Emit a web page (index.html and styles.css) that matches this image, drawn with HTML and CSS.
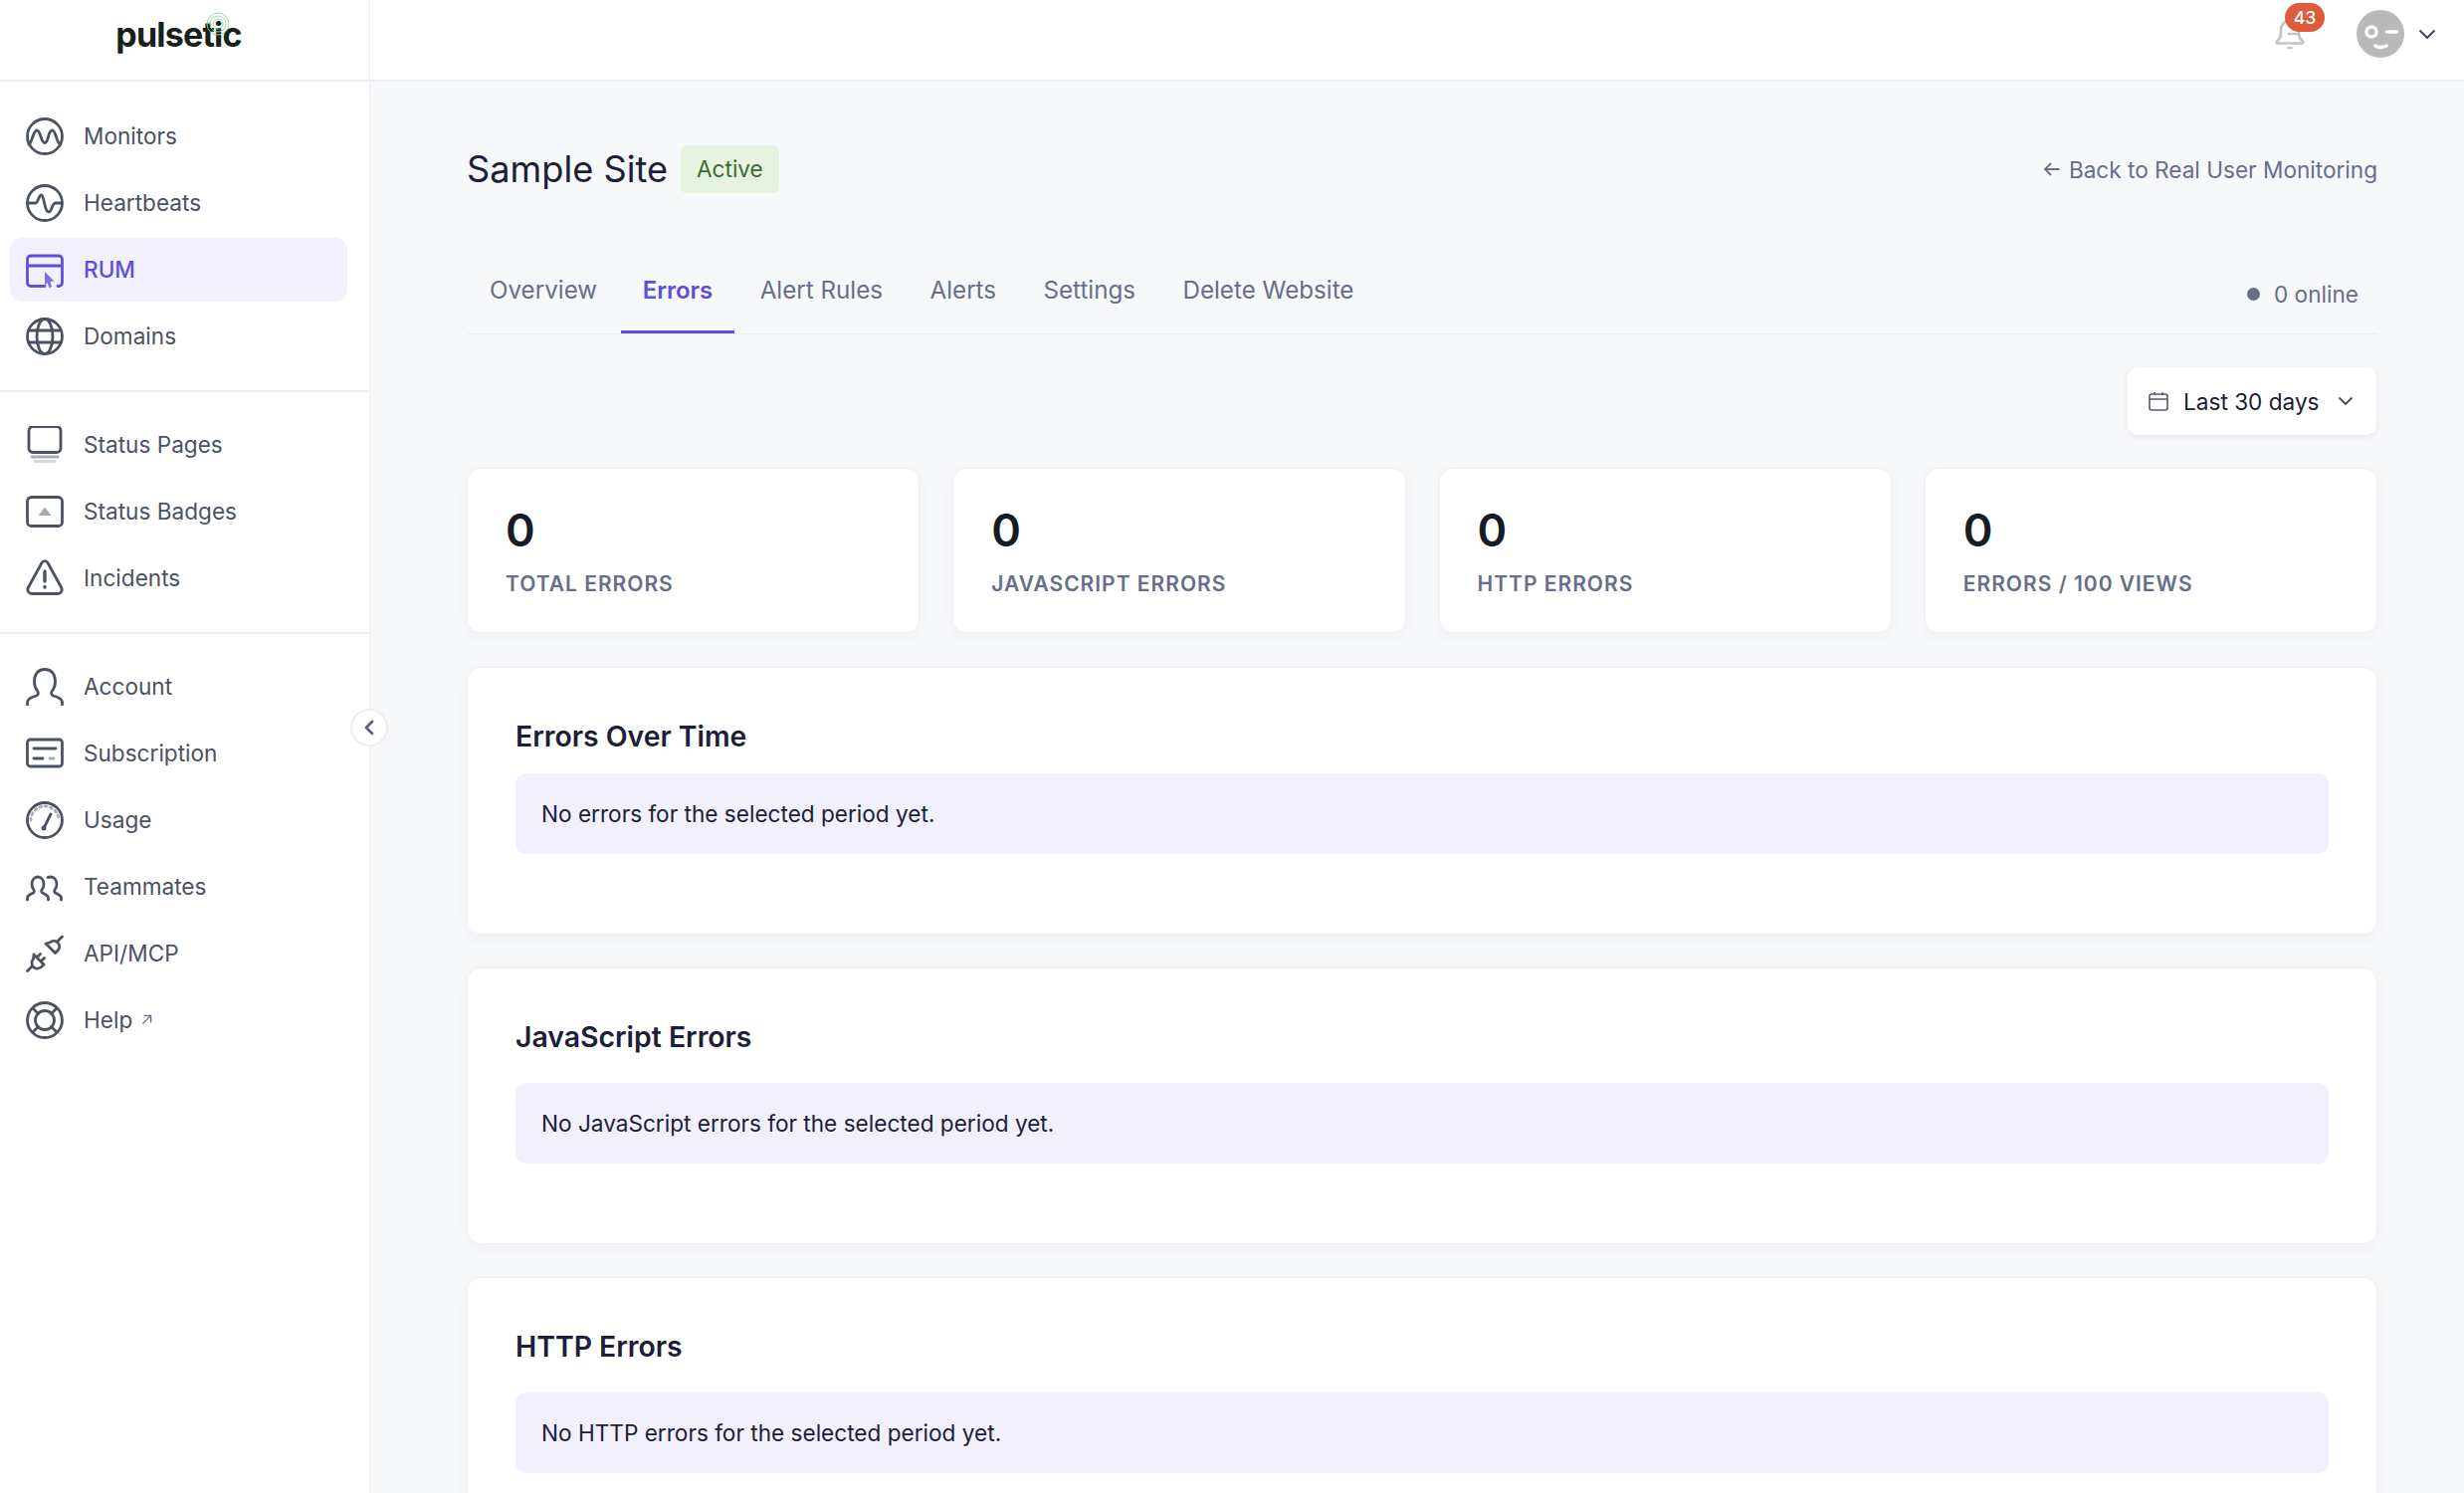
FILE: index.html
```html
<!DOCTYPE html>
<html lang="en">
<head>
    <meta charset="UTF-8">
    <title>Sample Site - Errors</title>
    <link rel="stylesheet" href="styles.css">
</head>
<body>
<div class="app">
    <aside class="sidebar">
        <div class="logo-row">
            <div class="logo">
                <svg class="logo-rings" viewBox="0 0 24 24"><circle cx="12" cy="12" r="5" /><circle cx="12" cy="12" r="8" /><circle cx="12" cy="12" r="11" /></svg>
                pulsetic
            </div>
        </div>
        <nav class="nav-group">
            <a class="nav-item"><svg class="nav-icon" viewBox="0 0 38 38"><circle cx="19" cy="19" r="17.5" /><path d="M3 27c3 0 4-14 8-14 4 0 4 12.500 8 12.500S22 13 26.500 13c4 0 4 14 8.500 14" /></svg>Monitors</a>
            <a class="nav-item"><svg class="nav-icon" viewBox="0 0 38 38"><circle cx="19" cy="19" r="17.5" /><path d="M2 19h8c2 0 3-8 5.500-8 3 0 3 17 7.500 17 3 0 3-9 7-9h6" /></svg>Heartbeats</a>
            <a class="nav-item active"><svg class="nav-icon" viewBox="0 0 38 38"><path d="M32 35.500h1a3.500 3.500 0 0 0 3.500-3.500V8.500A3.500 3.500 0 0 0 33 5H5A3.500 3.500 0 0 0 1.500 8.500V32A3.500 3.500 0 0 0 5 35.500h14M2 15h34" /><path class="fill soft" d="M19 21l9.500 9.500-4 .5 1.500 5-2.500 1.500-2-5.500-2.500 3z" /></svg>RUM</a>
            <a class="nav-item"><svg class="nav-icon" viewBox="0 0 38 38"><circle cx="19" cy="19" r="17.5" /><ellipse cx="19" cy="19" rx="8" ry="17.5" /><path d="M3 13h32M3 25h32" /></svg>Domains</a>
        </nav>
        <nav class="nav-group">
            <a class="nav-item"><svg class="nav-icon" viewBox="0 0 38 38"><rect x="3" y="0.5" width="32" height="26" rx="4" /><path class="light" d="M6 31h26" /><path class="lighter" d="M9 35.500h20" /></svg>Status Pages</a>
            <a class="nav-item"><svg class="nav-icon" viewBox="0 0 38 38"><rect x="1.5" y="4.5" width="35" height="29" rx="4" /><path class="fill gray" d="M19 14.500l6.500 8.500h-13z" /></svg>Status Badges</a>
            <a class="nav-item"><svg class="nav-icon" viewBox="0 0 38 38"><path d="M16 3.500c1.500-2.500 4.500-2.500 6 0L35.500 28c1.800 3.500-.5 6.500-3.500 6.500H6c-3 0-5.300-3-3.500-6.500z" /><path class="thick" d="M19 12v10M19 27.500v.5" /></svg>Incidents</a>
        </nav>
        <nav class="nav-group">
            <a class="nav-item"><svg class="nav-icon" viewBox="0 0 38 38"><path d="M1.500 37v-2c0-3.500 3-5 6-6l3-1c2-1 2.500-3 1-5-2-2.500-3-5-3-9C8.500 6 12.500 1.500 19 1.500S29.500 6 29.500 14c0 4-1 6.500-3 9-1.500 2-1 4 1 5l3 1c3 1 6 2.500 6 6v2" /></svg>Account</a>
            <a class="nav-item"><svg class="nav-icon" viewBox="0 0 38 38"><rect x="1.5" y="5" width="35" height="27" rx="3" /><path d="M8 14h22" /><path d="M8 24h9" /><path class="light" d="M24 24h4" /></svg>Subscription</a>
            <a class="nav-item"><svg class="nav-icon" viewBox="0 0 38 38"><circle cx="19" cy="19" r="17.5" /><path class="light dots" d="M5 19a14 14 0 0 1 28 0" /><path d="M18 27l7-14" /><circle class="fill" cx="18" cy="27" r="2.5" /></svg>Usage</a>
            <a class="nav-item"><svg class="nav-icon" viewBox="0 0 38 38"><path d="M1.500 32v-2c0-2 2-3 4-4l2-1c1-.5 1-2 .5-3-1.500-2-2-3.500-2-5.500 0-4.500 2.500-7.500 6-7.500s6 3 6 7.500c0 2-.5 3.500-2 5.500-.5 1-.5 2.500.5 3l2 1c2 1 4 2 4 4v2" /><path d="M22 9.500c1-.5 2-.5 3-.5 3.500 0 6 3 6 7.500 0 2-.5 3.500-2 5.500-.5 1-.5 2.500.5 3l2 1c2 1 4 2 4 4v2" /></svg>Teammates</a>
            <a class="nav-item"><svg class="nav-icon" viewBox="0 0 38 38"><path d="M1.500 36.500l5-5M8 20l10 10-2.500 2.500c-2.500 2-6 2-8 0s-2-6 0-8zM11 23l3.500-3.500M15 27l3.500-3.500" /><path d="M20 9l9.500 9.500L32 16c2.500-2.500 2-6 0-8s-5.500-2.500-8 0zM32 6.500L36.500 2" /></svg>API/MCP</a>
            <a class="nav-item"><svg class="nav-icon" viewBox="0 0 38 38"><circle cx="19" cy="19" r="17.5" /><circle cx="19" cy="19" r="9.5" /><path d="M7 7l5.500 5.500M31 7l-5.500 5.500M7 31l5.500-5.500M31 31l-5.500-5.500" /></svg>Help<svg class="ext-icon" viewBox="0 0 12 12"><path d="M1.500 10.500l9-9M3 1.500h7.500V9" /></svg></a>
        </nav>
    </aside>

    <button class="collapse-btn"><svg viewBox="0 0 12 16"><path d="M9 2L3 8l6 6" /></svg></button>

    <div class="main">
        <header class="topbar">
            <div class="bell">
                <svg viewBox="0 0 32 32"><path d="M3 23.500c2-2 4-3 4-8v-3c0-6 4-10 9-10s9 4 9 10v3c0 5 2 6 4 8 .8 1 .3 2-1 2H4c-1.300 0-1.800-1-1-2zM14.500 30h3M15 16h10" /></svg>
                <span class="bell-count">43</span>
            </div>
            <div class="avatar">
                <svg viewBox="0 0 48 48"><circle class="avatar-face" cx="24" cy="24" r="24" /><circle class="avatar-eye" cx="15" cy="22" r="5" /><path class="avatar-line" d="M30.500 22h10M19 36c3 2 7 2 11 0" /></svg>
            </div>
            <svg class="top-chevron" viewBox="0 0 18 12"><path d="M1.500 2.500L9 10l7.500-7.500" /></svg>
        </header>

        <main class="content">
            <div class="page-head">
                <div class="title-wrap">
                    <h1>Sample Site</h1>
                    <span class="status-badge">Active</span>
                </div>
                <a class="back-link"><svg viewBox="0 0 18 16"><path d="M16.500 8H2M8 2L2 8l6 6" /></svg>Back to Real User Monitoring</a>
            </div>

            <div class="tabs">
                <a class="tab">Overview</a>
                <a class="tab active">Errors</a>
                <a class="tab">Alert Rules</a>
                <a class="tab">Alerts</a>
                <a class="tab">Settings</a>
                <a class="tab">Delete Website</a>
                <span class="online"><i></i>0 online</span>
            </div>

            <div class="filter-row">
                <button class="date-btn">
                    <svg class="cal-icon" viewBox="0 0 20 20"><rect x="1" y="3" width="18" height="16" rx="2" /><path d="M1 8h18M6 1v3M14 1v3" /></svg>
                    Last 30 days
                    <svg class="date-chevron" viewBox="0 0 16 10"><path d="M1.500 1.500L8 8l6.500-6.500" /></svg>
                </button>
            </div>

            <div class="stats">
                <div class="stat"><div class="stat-num">0</div><div class="stat-label">TOTAL ERRORS</div></div>
                <div class="stat"><div class="stat-num">0</div><div class="stat-label">JAVASCRIPT ERRORS</div></div>
                <div class="stat"><div class="stat-num">0</div><div class="stat-label">HTTP ERRORS</div></div>
                <div class="stat"><div class="stat-num">0</div><div class="stat-label">ERRORS / 100 VIEWS</div></div>
            </div>

            <section class="panel">
                <h2>Errors Over Time</h2>
                <div class="notice">No errors for the selected period yet.</div>
            </section>
            <section class="panel">
                <h2>JavaScript Errors</h2>
                <div class="notice">No JavaScript errors for the selected period yet.</div>
            </section>
            <section class="panel">
                <h2>HTTP Errors</h2>
                <div class="notice">No HTTP errors for the selected period yet.</div>
            </section>
        </main>
    </div>
</div>
</body>
</html>
```

FILE: styles.css
```css
* {
    box-sizing: border-box;
}
html, body {
    height: 100%;
    margin: 0;
    overflow: hidden;
}
body {
    font-family: Inter, "Liberation Sans", sans-serif;
    font-size: 22.6px;
    background-color: #f7f8fa;
    color: #1b2038;
}
.app {
    display: flex;
    height: 100vh;
    position: relative;
}

/* sidebar */
.sidebar {
    width: 372px;
    flex-shrink: 0;
    background-color: #fff;
    border-right: 1px solid #eceef2;
}
.logo-row {
    height: 82px;
    border-bottom: 2px solid #eceef2;
    display: flex;
    justify-content: center;
}
.logo {
    position: relative;
    font-size: 34px;
    font-weight: 700;
    letter-spacing: -0.8px;
    color: #17211d;
    line-height: 69px;
    margin-right: 12px;
}
.logo-rings {
    position: absolute;
    left: 91px;
    top: 12px;
    width: 24px;
    height: 24px;
    fill: none;
    stroke: #8fd6a4;
    stroke-width: 0.9;
}
.nav-group {
    display: flex;
    flex-direction: column;
    gap: 3px;
    padding: 21px 22px 22px 10px;
    border-bottom: 2px solid #eceef2;
}
.logo-row + .nav-group {
    padding-top: 22.5px;
}
.nav-group:last-child {
    border-bottom: 0;
}
.nav-item {
    display: flex;
    align-items: center;
    gap: 20px;
    height: 64px;
    flex-shrink: 0;
    padding-left: 16px;
    border-radius: 12px;
    color: #4b5262;
}
.nav-item.active {
    background-color: #f2f0fc;
    color: #5e4fdb;
    font-weight: 500;
}
.nav-icon {
    width: 38px;
    height: 38px;
    flex-shrink: 0;
    fill: none;
    stroke: currentColor;
    stroke-width: 2.8;
    stroke-linecap: round;
    stroke-linejoin: round;
}
.nav-icon .fill {
    fill: currentColor;
    stroke: none;
}
.nav-icon .soft {
    fill: #7f70e8;
}
.nav-icon .gray {
    fill: #a9acb3;
}
.nav-icon .light {
    stroke: #a9acb3;
}
.nav-icon .lighter {
    stroke: #d6d8dc;
}
.nav-icon .thick {
    stroke-width: 3.4;
}
.nav-icon .dots {
    stroke-dasharray: 2 3.5;
}
.ext-icon {
    width: 11px;
    height: 11px;
    margin-left: -11px;
    fill: none;
    stroke: #666e8a;
    stroke-width: 1.5;
}
.collapse-btn {
    position: absolute;
    left: 352px;
    top: 712px;
    width: 38px;
    height: 38px;
    padding: 0;
    display: flex;
    align-items: center;
    justify-content: center;
    background-color: #fff;
    border: 2px solid #eceef2;
    border-radius: 50%;
}
.collapse-btn svg {
    width: 12px;
    height: 16px;
    fill: none;
    stroke: #59617c;
    stroke-width: 2.8;
    stroke-linecap: round;
    stroke-linejoin: round;
}

/* top bar */
.main {
    flex: 1;
    min-width: 0;
}
.topbar {
    height: 82px;
    background-color: #fff;
    border-bottom: 2px solid #eceef2;
    display: flex;
    align-items: center;
    justify-content: flex-end;
    padding: 0 28px 13px 0;
}
.bell {
    position: relative;
    width: 32px;
    height: 32px;
    margin-right: 51px;
}
.bell svg {
    display: block;
    width: 32px;
    height: 32px;
    fill: none;
    stroke: #c2c4c7;
    stroke-width: 2.6;
    stroke-linecap: round;
    stroke-linejoin: round;
}
.bell-count {
    position: absolute;
    left: 11px;
    top: -15px;
    width: 40px;
    height: 29px;
    line-height: 29px;
    text-align: center;
    border-radius: 15px;
    background-color: #dd5c3c;
    color: #fff;
    font-size: 17.6px;
    font-weight: 500;
}
.avatar {
    width: 48px;
    height: 48px;
    margin-right: 14px;
}
.avatar svg {
    display: block;
    width: 48px;
    height: 48px;
}
.avatar-face {
    fill: #b9b9b9;
}
.avatar-eye {
    fill: none;
    stroke: #fff;
    stroke-width: 3.6;
}
.avatar-line {
    fill: none;
    stroke: #fff;
    stroke-width: 3.6;
    stroke-linecap: round;
}
.top-chevron {
    width: 18px;
    height: 12px;
    fill: none;
    stroke: #454b5a;
    stroke-width: 2.2;
}

/* page content */
.content {
    padding: 0 87px 0 97px;
}
.page-head {
    height: 176px;
    display: flex;
    align-items: center;
    justify-content: space-between;
}
.title-wrap {
    display: flex;
    align-items: center;
    gap: 13px;
}
h1 {
    margin: 0;
    font-size: 36.2px;
    font-weight: 400;
    color: #1b2038;
}
.status-badge {
    height: 48px;
    line-height: 48px;
    padding: 0 16px;
    border-radius: 6px;
    background-color: #e6f3df;
    color: #3c6b33;
}
.back-link {
    display: flex;
    align-items: center;
    gap: 8px;
    color: #666e8a;
}
.back-link svg {
    width: 18px;
    height: 16px;
    fill: none;
    stroke: #666e8a;
    stroke-width: 1.8;
}
.tabs {
    height: 78px;
    display: flex;
    align-items: stretch;
    padding-left: 1px;
    border-bottom: 1px solid #eceef2;
}
.tab {
    display: flex;
    align-items: center;
    padding: 0 22px 7px;
    margin-right: 3.4px;
    font-size: 24.2px;
    color: #666e8a;
    border-bottom: 3px solid transparent;
}
.tab:first-child {
    margin-right: 1.5px;
}
.tab.active {
    color: #5e4fdb;
    font-weight: 600;
    font-size: 24px;
    border-bottom-color: #5e4fdb;
}
.online {
    margin-left: auto;
    display: flex;
    align-items: center;
    gap: 14px;
    padding: 0 19px 2px 0;
    color: #666e8a;
}
.online i {
    width: 13px;
    height: 13px;
    border-radius: 50%;
    background-color: #666e8a;
}
.filter-row {
    display: flex;
    justify-content: flex-end;
    padding: 33px 1px 0 0;
}
.date-btn {
    display: flex;
    align-items: center;
    width: 250px;
    height: 68px;
    padding: 0 0 0 21px;
    background-color: #fff;
    border: 0;
    border-radius: 10px;
    box-shadow: 0 2px 6px rgba(30, 40, 70, 0.08);
    font-family: inherit;
    font-size: 22.6px;
    color: #1b2038;
}
.cal-icon {
    width: 20px;
    height: 20px;
    margin-right: 15px;
    fill: none;
    stroke: #555c6c;
    stroke-width: 1.6;
}
.date-chevron {
    width: 16px;
    height: 10px;
    margin-left: 18px;
    fill: none;
    stroke: #454b5a;
    stroke-width: 1.8;
}
.stats {
    display: grid;
    grid-template-columns: repeat(4, 1fr);
    gap: 33px;
    margin-top: 33px;
}
.stat, .panel {
    background-color: #fff;
    border-radius: 14px;
    border: 1px solid #eff0f4;
    box-shadow: 0 4px 14px rgba(30, 40, 70, 0.04);
}
.stat {
    height: 166px;
    padding: 34px 38px 0;
}
.stat-num {
    font-size: 45px;
    font-weight: 600;
    line-height: 56px;
    color: #171c24;
}
.stat-label {
    margin-top: 10px;
    font-size: 21px;
    font-weight: 600;
    letter-spacing: 1px;
    line-height: 32px;
    color: #666e8a;
}
.panel {
    margin-top: 34px;
    height: 269px;
    padding: 49px 48px 0;
}
.panel + .panel {
    margin-top: 33px;
    height: 278px;
}
h2 {
    margin: 0 0 17px;
    font-size: 28.4px;
    font-weight: 600;
    line-height: 40px;
    color: #1b2038;
}
.panel + .panel h2 {
    margin-bottom: 26px;
}
.notice {
    height: 81px;
    line-height: 81px;
    padding-left: 26px;
    border-radius: 10px;
    background-color: #f2f0fc;
    color: #1b2038;
}
```
